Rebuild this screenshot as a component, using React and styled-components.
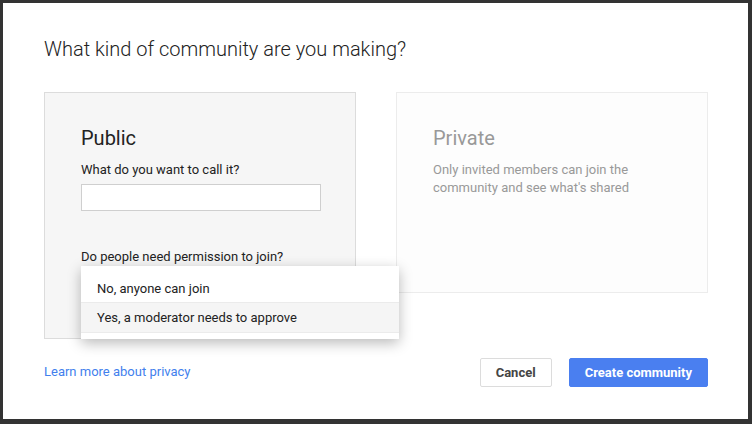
import React from 'react'
import styled, { createGlobalStyle } from 'styled-components'

const Global = createGlobalStyle`
  html, body {
    margin: 0;
    padding: 0;
    background: #333;
  }
  body {
    font-family: Roboto, Arial, sans-serif;
    -webkit-font-smoothing: antialiased;
  }
`

const Frame = styled.div`
  width: 752px;
  height: 424px;
  box-sizing: border-box;
  padding: 3px 4px 5px 3px;
  background: #333;
`

const Dialog = styled.div`
  height: 100%;
  box-sizing: border-box;
  background: #fff;
  padding: 33px 40px 0 41px;
  display: flex;
  flex-direction: column;
`

const Title = styled.h1`
  margin: 0;
  font-size: 20px;
  line-height: 26px;
  font-weight: 300;
  color: #222;
`

const Cards = styled.div`
  display: flex;
  gap: 40px;
  align-items: flex-start;
  margin-top: 30px;
`

const Card = styled.div`
  position: relative;
  width: 312px;
  height: ${p => p.$h}px;
  box-sizing: border-box;
  padding: 32px 36px 0;
  background: ${p => (p.$active ? '#f6f6f6' : '#fdfdfd')};
  border: 1px solid ${p => (p.$active ? '#dcdcdc' : '#ececec')};
`

const CardTitle = styled.h2`
  margin: 0;
  font-size: 20px;
  line-height: 26px;
  font-weight: 400;
  color: ${p => (p.$muted ? '#999' : '#222')};
`

const Label = styled.div`
  margin-top: ${p => p.$top || 0}px;
  font-size: 13px;
  line-height: 16px;
  color: #222;
`

const Desc = styled.p`
  margin: 10px 0 0;
  font-size: 13px;
  line-height: 18px;
  color: #999;
`

const Input = styled.input`
  display: block;
  margin-top: 6px;
  width: 240px;
  height: 27px;
  box-sizing: border-box;
  border: 1px solid #cfcfcf;
  background: #fff;
  outline: none;
`

const Menu = styled.ul`
  position: absolute;
  left: 36px;
  top: 173px;
  width: 318px;
  margin: 0;
  padding: 0;
  list-style: none;
  background: #fff;
  border-radius: 2px;
  box-shadow: 0 4px 14px rgba(0, 0, 0, 0.28);
  z-index: 2;
`

const MenuItem = styled.li`
  height: ${p => p.$h}px;
  box-sizing: border-box;
  display: flex;
  align-items: center;
  padding: ${p => p.$pt || 0}px 16px 0;
  font-size: 13px;
  color: #222;
  background: ${p => (p.$hover ? '#f5f5f5' : '#fff')};
  border-top: ${p => (p.$hover ? '1px solid #ebebeb' : 'none')};
  border-bottom: ${p => (p.$hover ? '1px solid #ebebeb' : 'none')};
`

const Footer = styled.div`
  display: flex;
  align-items: center;
  margin-top: 19px;
`

const Link = styled.a`
  font-size: 13px;
  color: #427fed;
  text-decoration: none;
  margin-top: -2px;
`

const Spacer = styled.div`
  flex: 1;
`

const Button = styled.button`
  height: 29px;
  box-sizing: border-box;
  padding: 0 ${p => p.$pad}px;
  margin-left: ${p => p.$ml || 0}px;
  font-family: Roboto, Arial, sans-serif;
  font-size: 13px;
  font-weight: 700;
  border-radius: 2px;
  border: 1px solid ${p => (p.$primary ? '#4a7ff0' : '#dcdcdc')};
  background: ${p => (p.$primary ? '#4a7ff0' : '#fff')};
  color: ${p => (p.$primary ? '#fff' : '#444')};
`

export default function App() {
  return (
    <>
      <Global />
      <Frame>
        <Dialog>
          <Title>What kind of community are you making?</Title>
          <Cards>
            <Card $active $h={247}>
              <CardTitle>Public</CardTitle>
              <Label $top={11}>What do you want to call it?</Label>
              <Input />
              <Label $top={38}>Do people need permission to join?</Label>
              <Menu>
                <MenuItem $h={36} $pt={8}>No, anyone can join</MenuItem>
                <MenuItem $h={31} $hover>Yes, a moderator needs to approve</MenuItem>
                <MenuItem $h={6} />
              </Menu>
            </Card>
            <Card $h={201}>
              <CardTitle $muted>Private</CardTitle>
              <Desc>Only invited members can join the community and see what's shared</Desc>
            </Card>
          </Cards>
          <Footer>
            <Link href="#">Learn more about privacy</Link>
            <Spacer />
            <Button $pad={15}>Cancel</Button>
            <Button $primary $pad={15} $ml={17}>Create community</Button>
          </Footer>
        </Dialog>
      </Frame>
    </>
  )
}
